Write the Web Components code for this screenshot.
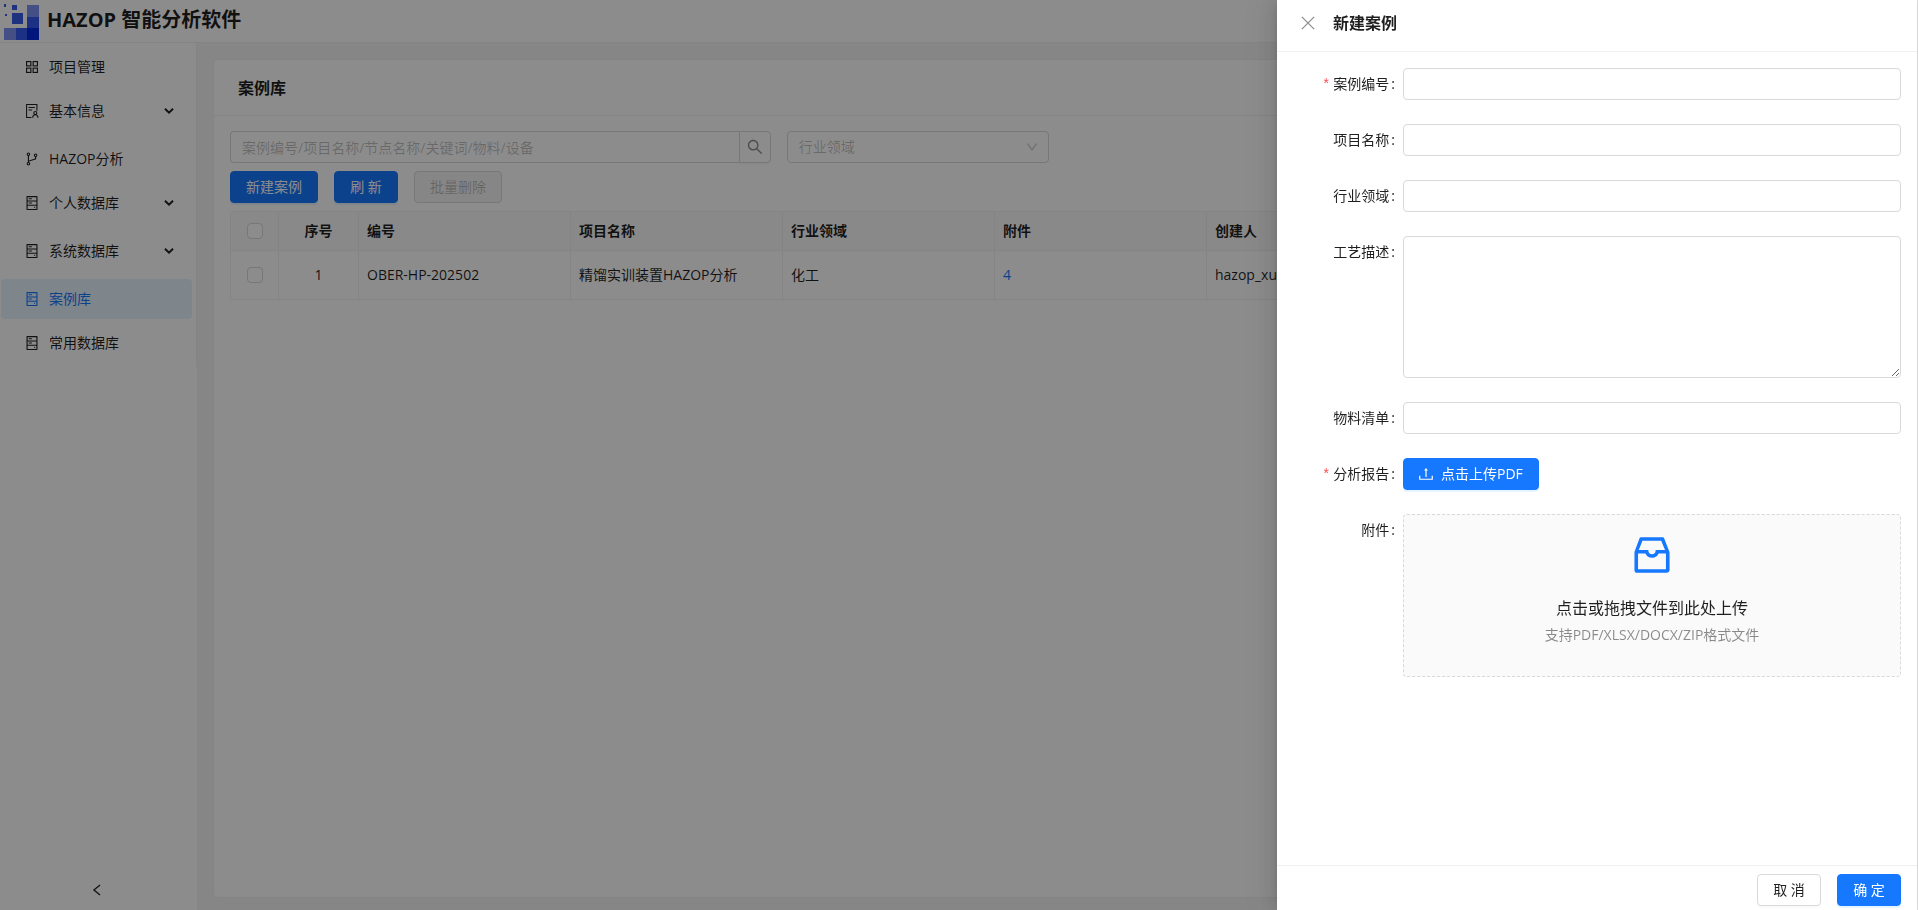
<!DOCTYPE html>
<html lang="zh-CN">
<head>
<meta charset="utf-8">
<title>HAZOP 智能分析软件</title>
<style>
	html,
	body {
		height: 100%;
		margin: 0;
	}
	body {
		background: #f5f5f5;
		border-right: 1px solid #dedede;
		box-sizing: border-box;
		color: rgba(0, 0, 0, .88);
		font-family: "Open Sans", "Noto Sans CJK SC", sans-serif;
		font-size: 14px;
		line-height: 22px;
		overflow: hidden;
	}
</style>
</head>
<body>
<hazop-app></hazop-app>

<script>
/* global HTMLElement */

const icons = {
	project: '<g fill="none" stroke="currentColor" stroke-width="72"><rect x="164" y="164" width="276" height="276"/><rect x="584" y="164" width="276" height="276"/><rect x="164" y="584" width="276" height="276"/><rect x="584" y="584" width="276" height="276"/></g>',
	info: '<g fill="none" stroke="currentColor" stroke-width="68"><path d="M480 924H166V100h660v400"/><path d="M290 290h400M290 450h230"/><circle cx="724" cy="640" r="96"/><path d="M556 936c0-120 70-190 168-190s168 70 168 190"/></g>',
	branch: '<path d="M740 161c-61.800 0-112 50.200-112 112 0 50.100 33.100 92.600 78.500 106.900v95.900L320 602.400V318.100c44.200-15 76-56.900 76-106.100 0-61.800-50.200-112-112-112s-112 50.200-112 112c0 49.200 31.800 91 76 106.100V706c-44.200 15-76 56.900-76 106.100 0 61.800 50.200 112 112 112s112-50.200 112-112c0-49.200-31.800-91-76-106.100v-27.800l423.500-138.700a50.520 50.520 0 0034.900-48.200V378.200c42.900-15.800 73.600-57 73.600-105.200 0-61.800-50.200-112-112-112zm-504 51a48 48 0 0196 0 48 48 0 01-96 0zm96 600a48 48 0 01-96 0 48 48 0 0196 0zm408-491a48 48 0 010-96 48 48 0 010 96z"/>',
	database: '<path d="M832 64H192c-17.700 0-32 14.300-32 32v832c0 17.700 14.300 32 32 32h640c17.700 0 32-14.300 32-32V96c0-17.700-14.300-32-32-32zm-600 72h560v208H232V136zm560 480H232V408h560v208zm0 272H232V680h560v208zM304 208h200v64H304zM304 480h200v64H304zM640 784a40 40 0 1080 0 40 40 0 10-80 0z"/>',
	down: '<path d="M884 256h-75c-5.100 0-9.900 2.500-12.900 6.600L512 654.200 227.900 262.600c-3-4.100-7.800-6.600-12.900-6.600h-75c-6.500 0-10.300 7.400-6.500 12.700l352.600 486.100c12.800 17.600 39 17.600 51.700 0l352.600-486.100c3.900-5.300.1-12.700-6.400-12.700z"/>',
	arrow: '<path d="M210 350l302 290 302-290" fill="none" stroke="currentColor" stroke-width="150"/>',
	left: '<path d="M740 130L280 512l460 382" fill="none" stroke="currentColor" stroke-width="96"/>',
	close: '<path d="M120 120l784 784M904 120L120 904" fill="none" stroke="currentColor" stroke-width="84"/>',
	search: '<path d="M909.600 854.500L649.900 594.800C690.200 542.700 712 479 712 412c0-80.200-31.300-155.400-87.900-212.100-56.600-56.700-132-87.900-212.100-87.900s-155.500 31.300-212.100 87.900C143.200 256.500 112 331.800 112 412c0 80.100 31.300 155.500 87.900 212.100C256.500 680.800 331.800 712 412 712c67 0 130.600-21.800 182.700-62l259.700 259.600a8.200 8.200 0 0011.600 0l43.600-43.500a8.200 8.200 0 000-11.600zM570.400 570.400C528 612.700 471.800 636 412 636s-116-23.300-158.400-65.600C211.300 528 188 471.800 188 412s23.300-116.100 65.600-158.400C296 211.300 352.200 188 412 188s116.100 23.200 158.400 65.600S636 352.200 636 412s-23.300 116.100-65.600 158.400z"/>',
	upload: '<path d="M112 620v228h800V620" fill="none" stroke="currentColor" stroke-width="76"/><path d="M474 700V280H390L512 120l122 160H550v420z"/>',
	inbox: '<path d="M885.200 446.300l-.2-.8-112.200-285.100c-5-16.100-19.900-27.200-36.800-27.200H281.200c-17 0-32.100 11.300-36.900 27.600L139.400 443l-.3.7-.2.8c-1.300 4.900-1.700 9.900-1 14.800-.1 1.600-.2 3.200-.2 4.800V830a60.900 60.900 0 0060.800 60.800h627.200c33.500 0 60.800-27.300 60.900-60.800V464.100c0-1.300 0-2.600-.1-3.700.4-4.900 0-9.600-1.300-14.100zm-295.800-43l-.3 15.700c-.8 44.900-31.800 75.100-77.100 75.100-22.100 0-41.100-7.100-54.800-20.600S436 441.200 435.600 419l-.3-15.700H229.500L309 210h399.200l81.700 193.300H589.400zm-375 76.800h157.300c24.300 57.100 76 90.800 140.400 90.800 33.700 0 65-9.400 90.300-27.200 22.200-15.600 39.500-37.400 50.700-63.600h156.500V814H214.400V480.100z"/>'
};

class UiIcon extends HTMLElement {
	constructor() {
		super();
		this.attachShadow({ mode: 'open' });
	}

	connectedCallback() {
		const name = this.getAttribute('name');
		const box = name === 'inbox' ? '0 0 1024 1024' : '64 64 896 896';
		this.shadowRoot.innerHTML = `
			<style>
			:host {
				display: inline-flex;
				flex: none;
				height: var(--icon-size, 14px);
				width: var(--icon-size, 14px);
			}
			svg {
				display: block;
				height: 100%;
				width: 100%;
			}
			</style>
			<svg viewBox="${box}" fill="currentColor" aria-hidden="true">${icons[name] || ''}</svg>
		`;
	}
}
window.customElements.define('ui-icon', UiIcon);

class UiButton extends HTMLElement {
	constructor() {
		super();
		this.attachShadow({ mode: 'open' });
	}

	connectedCallback() {
		const type = this.getAttribute('type') || 'default';
		this.shadowRoot.innerHTML = `
			<style>
			:host {
				display: inline-flex;
				vertical-align: top;
			}
			button {
				align-items: center;
				background: #fff;
				border: 1px solid #d9d9d9;
				border-radius: 4px;
				box-shadow: 0 2px 0 rgba(0, 0, 0, .02);
				box-sizing: border-box;
				color: inherit;
				cursor: pointer;
				display: flex;
				font: inherit;
				gap: 8px;
				height: 32px;
				justify-content: center;
				min-width: 64px;
				padding: 0 15px;
				white-space: nowrap;
			}
			.primary {
				background: #1677ff;
				border-color: #1677ff;
				box-shadow: 0 2px 0 rgba(5, 145, 255, .1);
				color: #fff;
			}
			button:disabled {
				background: rgba(0, 0, 0, .04);
				box-shadow: none;
				color: rgba(0, 0, 0, .25);
				cursor: not-allowed;
			}
			</style>
			<button class="${type}" type="button" ${this.hasAttribute('disabled') ? 'disabled' : ''}><slot></slot></button>
		`;
	}
}
window.customElements.define('ui-button', UiButton);

class AppHeader extends HTMLElement {
	constructor() {
		super();
		this.attachShadow({ mode: 'open' }).innerHTML = `
			<style>
			:host {
				align-items: center;
				background: #fff;
				border-bottom: 1px solid #f0f0f0;
				box-sizing: border-box;
				display: flex;
				gap: 7px;
				height: 43px;
				padding: 2px 4px 0;
			}
			h1 {
				font-size: 20px;
				font-weight: 700;
				line-height: 28px;
				margin: 0;
				padding-bottom: 4px;
			}
			</style>
			<svg width="36" height="36" viewBox="0 0 36 36" aria-hidden="true">
				<path fill="#385ce8" d="M0 0h2v3H0zM8 1h5v5H8zM1 10h2v2H1zM8 9h11v11H8z"/>
				<path fill="#7d92f2" d="M23 1h12v12H23zM0 24h12v12H0z"/>
				<path fill="#3459f0" d="M23 13h12v11H23zM12 24h11v12H12z"/>
				<path fill="#0028e4" d="M23 24h12v12H23z"/>
			</svg>
			<h1><slot></slot></h1>
		`;
	}
}
window.customElements.define('app-header', AppHeader);

class MenuItem extends HTMLElement {
	constructor() {
		super();
		this.attachShadow({ mode: 'open' });
	}

	connectedCallback() {
		const arrow = this.hasAttribute('submenu') ? '<ui-icon class="arrow" name="arrow"></ui-icon>' : '';
		this.shadowRoot.innerHTML = `
			<style>
			:host {
				display: block;
			}
			:host([submenu]) {
				margin-bottom: 4px;
			}
			a {
				align-items: center;
				border-radius: 4px;
				color: inherit;
				display: flex;
				gap: 10px;
				height: 40px;
				padding: 0 17px 0 24px;
				text-decoration: none;
			}
			span {
				flex: 1;
			}
			.arrow {
				--icon-size: 12px;
			}
			:host([selected]) a {
				background: #e6f4ff;
				color: #1677ff;
			}
			</style>
			<a href="#">
				<ui-icon name="${this.getAttribute('icon')}"></ui-icon>
				<span><slot></slot></span>
				${arrow}
			</a>
		`;
	}
}
window.customElements.define('menu-item', MenuItem);

class SideMenu extends HTMLElement {
	constructor() {
		super();
		this.attachShadow({ mode: 'open' }).innerHTML = `
			<style>
			:host {
				background: #fff;
				box-sizing: border-box;
				display: flex;
				flex-direction: column;
				justify-content: space-between;
				width: 197px;
			}
			nav {
				border-right: 1px solid #f0f0f0;
				display: flex;
				flex-direction: column;
				gap: 4px;
				padding: 4px 4px 4px 1px;
			}
			button {
				--icon-size: 12px;
				align-items: center;
				background: none;
				border: 0;
				color: inherit;
				display: flex;
				height: 40px;
				justify-content: center;
				padding: 0 3px 0 0;
			}
			</style>
			<nav><slot></slot></nav>
			<button type="button" aria-label="收起菜单"><ui-icon name="left"></ui-icon></button>
		`;
	}
}
window.customElements.define('side-menu', SideMenu);

class SearchBar extends HTMLElement {
	constructor() {
		super();
		this.attachShadow({ mode: 'open' }).innerHTML = `
			<style>
			:host {
				display: grid;
				gap: 16px;
				grid-template-columns: repeat(6, minmax(0, 1fr));
			}
			.search {
				display: flex;
				grid-column: span 2;
			}
			input,
			select,
			button {
				background: #fff;
				border: 1px solid #d9d9d9;
				border-radius: 4px;
				box-sizing: border-box;
				font: inherit;
				height: 32px;
				margin: 0;
			}
			input {
				border-radius: 4px 0 0 4px;
				border-right: 0;
				flex: 1;
				min-width: 0;
				padding: 0 11px;
			}
			input::placeholder {
				color: rgba(0, 0, 0, .25);
			}
			button {
				--icon-size: 16px;
				align-items: center;
				border-radius: 0 4px 4px 0;
				box-shadow: 0 2px 0 rgba(0, 0, 0, .02);
				color: rgba(0, 0, 0, .45);
				display: flex;
				justify-content: center;
				padding: 0;
				width: 32px;
			}
			.select {
				align-items: center;
				display: grid;
				grid-template-columns: minmax(0, 1fr);
			}
			select {
				appearance: none;
				color: rgba(0, 0, 0, .25);
				grid-area: 1 / 1;
				padding: 0 30px 0 11px;
				width: 100%;
			}
			.select ui-icon {
				--icon-size: 12px;
				color: rgba(0, 0, 0, .25);
				grid-area: 1 / 1;
				justify-self: end;
				margin-right: 11px;
				pointer-events: none;
			}
			</style>
			<div class="search">
				<input type="text" aria-label="搜索" placeholder="案例编号/项目名称/节点名称/关键词/物料/设备">
				<button type="button" aria-label="搜索"><ui-icon name="search"></ui-icon></button>
			</div>
			<div class="select">
				<select aria-label="行业领域"><option>行业领域</option></select>
				<ui-icon name="down"></ui-icon>
			</div>
		`;
	}
}
window.customElements.define('search-bar', SearchBar);

class CaseTable extends HTMLElement {
	constructor() {
		super();
		this.attachShadow({ mode: 'open' }).innerHTML = `
			<style>
			:host {
				display: block;
			}
			table {
				border: 1px solid #f0f0f0;
				border-radius: 4px 4px 0 0;
				border-right: 0;
				border-bottom: 0;
				border-spacing: 0;
				table-layout: fixed;
				width: 100%;
			}
			th,
			td {
				border-bottom: 1px solid #f0f0f0;
				border-right: 1px solid #f0f0f0;
				box-sizing: border-box;
				padding: 0 8px;
				text-align: left;
			}
			th {
				background: #fafafa;
				font-weight: 600;
				height: 39px;
			}
			td {
				height: 49px;
			}
			.center {
				text-align: center;
			}
			.check {
				width: 48px;
			}
			.index {
				width: 80px;
			}
			.data {
				width: 212px;
			}
			a {
				color: #1677ff;
				text-decoration: none;
			}
			input {
				appearance: none;
				background: #fff;
				border: 1px solid #d9d9d9;
				border-radius: 4px;
				box-sizing: border-box;
				display: block;
				height: 16px;
				margin: 0 auto;
				width: 16px;
			}
			</style>
			<table>
				<thead>
					<tr>
						<th class="check center"><input type="checkbox" aria-label="全选"></th>
						<th class="index center">序号</th>
						<th class="data">编号</th>
						<th class="data">项目名称</th>
						<th class="data">行业领域</th>
						<th class="data">附件</th>
						<th class="data">创建人</th>
						<th></th>
					</tr>
				</thead>
				<tbody>
					<tr>
						<td class="center"><input type="checkbox" aria-label="选择"></td>
						<td class="center">1</td>
						<td>OBER-HP-202502</td>
						<td>精馏实训装置HAZOP分析</td>
						<td>化工</td>
						<td><a href="#">4</a></td>
						<td>hazop_xuc</td>
						<td></td>
					</tr>
				</tbody>
			</table>
		`;
	}
}
window.customElements.define('case-table', CaseTable);

class PageCard extends HTMLElement {
	constructor() {
		super();
		this.attachShadow({ mode: 'open' }).innerHTML = `
			<style>
			:host {
				background: #fff;
				border: 1px solid #f0f0f0;
				border-radius: 4px;
				display: block;
				min-width: 0;
			}
			h2 {
				border-bottom: 1px solid #f0f0f0;
				font-size: 16px;
				font-weight: 600;
				line-height: 24px;
				margin: 0;
				padding: 16px 24px 15px;
			}
			.body {
				display: flex;
				flex-direction: column;
				gap: 8px;
				padding: 15px 16px;
			}
			</style>
			<h2><slot name="title"></slot></h2>
			<div class="body"><slot></slot></div>
		`;
	}
}
window.customElements.define('page-card', PageCard);

class FormField extends HTMLElement {
	constructor() {
		super();
		this.attachShadow({ mode: 'open' });
	}

	connectedCallback() {
		const type = this.getAttribute('type') || 'input';
		let control = '<slot></slot>';
		if (type === 'input') {
			control = '<input id="control" type="text">';
		} else if (type === 'textarea') {
			control = '<textarea id="control"></textarea>';
		}
		const tag = type === 'slot' ? 'span' : 'label';
		this.shadowRoot.innerHTML = `
			<style>
			:host {
				display: grid;
				grid-template-columns: 110px minmax(0, 1fr);
			}
			.label {
				height: 32px;
				line-height: 32px;
				padding-right: 8px;
				text-align: right;
			}
			.label::after {
				content: ":";
				margin-left: 2px;
			}
			:host([required]) .label::before {
				color: #ff4d4f;
				content: "*";
				display: inline-block;
				font-family: "Liberation Mono", monospace;
				line-height: 16px;
				margin-right: 3px;
				vertical-align: middle;
			}
			input,
			textarea {
				background: #fff;
				border: 1px solid #d9d9d9;
				border-radius: 4px;
				box-sizing: border-box;
				display: block;
				font: inherit;
				height: 32px;
				margin: 0;
				padding: 4px 11px;
				width: 100%;
			}
			textarea {
				height: 142px;
				resize: vertical;
			}
			</style>
			<${tag} class="label" ${tag === 'label' ? 'for="control"' : ''}>${this.getAttribute('label')}</${tag}>
			<div>${control}</div>
		`;
	}
}
window.customElements.define('form-field', FormField);

class UploadDragger extends HTMLElement {
	constructor() {
		super();
		this.attachShadow({ mode: 'open' }).innerHTML = `
			<style>
			:host {
				display: block;
			}
			button {
				--icon-size: 48px;
				align-items: center;
				background: #fafafa;
				border: 1px dashed #d9d9d9;
				border-radius: 4px;
				box-sizing: border-box;
				color: inherit;
				cursor: pointer;
				display: flex;
				flex-direction: column;
				font: inherit;
				padding: 16px 16px 31px;
				width: 100%;
			}
			ui-icon {
				color: #1677ff;
				margin-bottom: 16px;
			}
			.text {
				font-size: 16px;
				line-height: 26px;
				margin-bottom: 4px;
			}
			.hint {
				color: rgba(0, 0, 0, .45);
				line-height: 20px;
			}
			</style>
			<button type="button">
				<ui-icon name="inbox"></ui-icon>
				<span class="text"><slot></slot></span>
				<span class="hint"><slot name="hint"></slot></span>
			</button>
		`;
	}
}
window.customElements.define('upload-dragger', UploadDragger);

class SideDrawer extends HTMLElement {
	constructor() {
		super();
		this.attachShadow({ mode: 'open' }).innerHTML = `
			<style>
			:host {
				background: rgba(0, 0, 0, .45);
				bottom: 0;
				display: flex;
				justify-content: flex-end;
				left: 0;
				position: fixed;
				right: 1px;
				top: 0;
			}
			section {
				background: #fff;
				box-shadow: -6px 0 16px 0 rgba(0, 0, 0, .08), -3px 0 6px -4px rgba(0, 0, 0, .12), -9px 0 28px 8px rgba(0, 0, 0, .05);
				box-sizing: border-box;
				display: flex;
				flex-direction: column;
				max-width: 100%;
				width: 640px;
			}
			header {
				align-items: center;
				border-bottom: 1px solid #f0f0f0;
				display: flex;
				gap: 18px;
				padding: 11px 24px 16px;
			}
			.close {
				background: none;
				border: 0;
				color: rgba(0, 0, 0, .45);
				display: flex;
				padding: 0;
			}
			h2 {
				font-size: 16px;
				font-weight: 600;
				line-height: 24px;
				margin: 0;
			}
			form {
				display: flex;
				flex: 1;
				flex-direction: column;
				gap: 24px;
				overflow: auto;
				padding: 16px;
			}
			footer {
				border-top: 1px solid #f0f0f0;
				display: flex;
				gap: 16px;
				justify-content: flex-end;
				padding: 8px 16px 4px;
			}
			</style>
			<section role="dialog">
				<header>
					<button class="close" type="button" aria-label="关闭"><ui-icon name="close"></ui-icon></button>
					<h2><slot name="title"></slot></h2>
				</header>
				<form><slot></slot></form>
				<footer><slot name="footer"></slot></footer>
			</section>
		`;
	}
}
window.customElements.define('side-drawer', SideDrawer);

class HazopApp extends HTMLElement {
	constructor() {
		super();
		this.attachShadow({ mode: 'open' }).innerHTML = `
			<style>
			:host {
				display: flex;
				flex-direction: column;
				height: 100%;
			}
			.layout {
				display: flex;
				flex: 1;
				min-height: 0;
			}
			side-menu {
				flex: none;
			}
			main {
				display: grid;
				flex: 1;
				min-width: 0;
				padding: 16px 16px 12px;
			}
			.actions {
				display: flex;
				gap: 16px;
			}
			</style>
			<app-header>HAZOP 智能分析软件</app-header>
			<div class="layout">
				<side-menu>
					<menu-item icon="project">项目管理</menu-item>
					<menu-item icon="info" submenu>基本信息</menu-item>
					<menu-item icon="branch">HAZOP分析</menu-item>
					<menu-item icon="database" submenu>个人数据库</menu-item>
					<menu-item icon="database" submenu>系统数据库</menu-item>
					<menu-item icon="database" selected>案例库</menu-item>
					<menu-item icon="database">常用数据库</menu-item>
				</side-menu>
				<main>
					<page-card>
						<span slot="title">案例库</span>
						<search-bar></search-bar>
						<div class="actions">
							<ui-button type="primary">新建案例</ui-button>
							<ui-button type="primary">刷 新</ui-button>
							<ui-button disabled>批量删除</ui-button>
						</div>
						<case-table></case-table>
					</page-card>
				</main>
			</div>
			<side-drawer>
				<span slot="title">新建案例</span>
				<form-field label="案例编号" required></form-field>
				<form-field label="项目名称"></form-field>
				<form-field label="行业领域"></form-field>
				<form-field label="工艺描述" type="textarea"></form-field>
				<form-field label="物料清单"></form-field>
				<form-field label="分析报告" type="slot" required>
					<ui-button type="primary"><ui-icon name="upload"></ui-icon>点击上传PDF</ui-button>
				</form-field>
				<form-field label="附件" type="slot">
					<upload-dragger>点击或拖拽文件到此处上传<span slot="hint">支持PDF/XLSX/DOCX/ZIP格式文件</span></upload-dragger>
				</form-field>
				<ui-button slot="footer">取 消</ui-button>
				<ui-button slot="footer" type="primary">确 定</ui-button>
			</side-drawer>
		`;
	}
}
window.customElements.define('hazop-app', HazopApp);
</script>
</body>
</html>
